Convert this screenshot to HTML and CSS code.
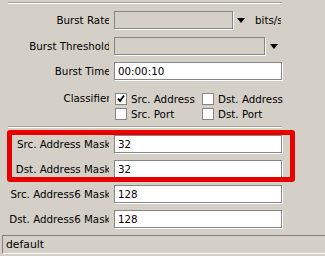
FILE: index.html
```html
<!DOCTYPE html>
<html lang="en">
<head>
    <meta charset="UTF-8">
    <title>Queue - Burst</title>
    <link rel="stylesheet" href="styles.css">
</head>
<body>
    <div class="form">
        <div class="sep"></div>

        <div class="row">
            <div class="label"><span>Burst Rate</span></div>
            <div class="field disabled rate"></div>
            <div class="arrow"></div>
            <div class="unit">bits/s</div>
        </div>

        <div class="row">
            <div class="label"><span>Burst Threshold</span></div>
            <div class="field disabled threshold"></div>
            <div class="arrow"></div>
        </div>

        <div class="row">
            <div class="label"><span>Burst Time</span></div>
            <div class="field">00:00:10</div>
        </div>

        <!-- Classifier checkboxes -->
        <div class="classifier">
            <div class="label"><span>Classifier</span></div>
            <div class="checks">
                <div class="check"><span class="box"><svg width="10" height="10" viewBox="0 0 10 10"><path d="M2 4.5 L4 7 L8 1.5" fill="none" stroke="#000" stroke-width="1.8"/></svg></span>Src. Address</div>
                <div class="check"><span class="box"></span>Dst. Address</div>
                <div class="check"><span class="box"></span>Src. Port</div>
                <div class="check"><span class="box"></span>Dst. Port</div>
            </div>
        </div>

        <div class="sep sep-low"></div>

        <div class="row">
            <div class="label"><span>Src. Address Mask</span></div>
            <div class="field">32</div>
        </div>

        <div class="row">
            <div class="label"><span>Dst. Address Mask</span></div>
            <div class="field">32</div>
        </div>

        <div class="row">
            <div class="label"><span>Src. Address6 Mask</span></div>
            <div class="field">128</div>
        </div>

        <div class="row">
            <div class="label"><span>Dst. Address6 Mask</span></div>
            <div class="field">128</div>
        </div>
    </div>

    <div class="status">default</div>

    <!-- red annotation around the mask fields -->
    <div class="highlight"></div>
</body>
</html>
```

FILE: styles.css
```css
body {
    margin: 0;
    width: 325px;
    height: 256px;
    overflow: hidden;
    background-color: #d4d0c8;
    font-family: "DejaVu Sans", sans-serif;
    font-size: 10.3px;
    color: #000;
    position: relative;
}

.form {
    padding: 2px 43px 0 0;
}

/* etched separator lines */
.sep {
    margin-left: 8px;
    border-top: 1px solid #a9a59d;
    border-bottom: 1px solid #fff;
}

.sep-low {
    margin-top: 5px;
}

.row {
    display: flex;
    align-items: center;
    height: 18px;
    margin-top: 7px;
}

.row:nth-child(3) {
    margin-top: 8px;
}

/* labels are right aligned and clipped before the fields */
.label {
    flex: none;
    width: 109px;
    margin-right: 5px;
    overflow: hidden;
}

.label span {
    display: block;
    width: 110.5px;
    text-align: right;
    white-space: nowrap;
    line-height: 18px;
}

.field {
    flex: 1;
    box-sizing: border-box;
    height: 18px;
    line-height: 16px;
    padding-left: 3px;
    background-color: #fff;
    border: 1px solid #868686;
    box-shadow: 1px 1px 0 #fff;
}

.field.disabled {
    background-color: #d4d0c8;
}

.field.rate {
    flex: none;
    width: 119px;
}

.field.threshold {
    flex: none;
    width: 151px;
}

.arrow {
    flex: none;
    width: 0;
    height: 0;
    margin-left: 5px;
    border-left: 4px solid transparent;
    border-right: 4px solid transparent;
    border-top: 5px solid #000;
}

.rate + .arrow {
    margin-left: 4px;
}

.unit {
    flex: 1;
    min-width: 0;
    margin: 0 1px 0 10px;
    overflow: hidden;
    white-space: nowrap;
}

/* Classifier block */
.classifier {
    display: flex;
    margin-top: 11px;
}

.classifier .label span {
    line-height: 15px;
}

.checks {
    display: grid;
    grid-template-columns: 87px 1fr;
    margin-left: 1px;
}

.check {
    display: flex;
    align-items: center;
    height: 15px;
    white-space: nowrap;
}

.box {
    flex: none;
    box-sizing: border-box;
    width: 12px;
    height: 12px;
    margin-right: 4px;
    display: flex;
    align-items: center;
    justify-content: center;
    background-color: #fff;
    border: 1px solid #868686;
}

/* status bar */
.status {
    margin: 7px 0 0 2px;
    height: 17px;
    line-height: 17px;
    padding-left: 3px;
    font-size: 10.8px;
    border-top: 1px solid #808080;
    border-left: 1px solid #808080;
    border-bottom: 1px solid #fff;
}

.highlight {
    position: absolute;
    left: 7px;
    top: 130px;
    width: 278px;
    height: 42px;
    border: 5px solid #e60000;
    border-radius: 3px;
}
```
